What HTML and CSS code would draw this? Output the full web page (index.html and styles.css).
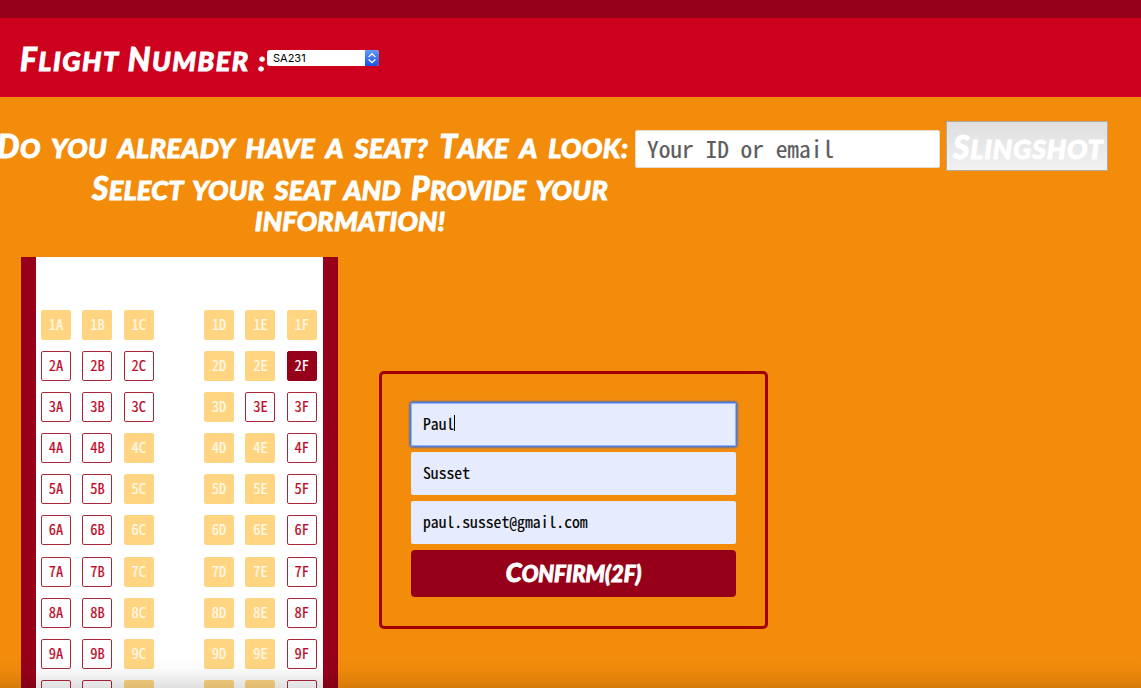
FILE: index.html
```html
<!DOCTYPE html>
<html lang="en">
<head>
<meta charset="utf-8">
<title>Slingshot Airlines</title>
<link rel="stylesheet" href="styles.css">
</head>
<body>
<div class="topbar"></div>
<header class="flight-bar">
  <label class="marker flight-label"><b>F</b>light <b>N</b>umber :</label>
  <div class="select"><span>SA231</span><svg class="arrows" viewBox="0 0 14 16"><path d="M4 6.6 7 3.7l3 2.9M4 9.7l3 2.9 3-2.9"/></svg></div>
</header>
<main>
  <div class="lookup">
    <label class="marker lookup-label"><b>D</b>o you already have a seat? <b>T</b>ake a look:</label>
    <input class="lookup-input" placeholder="Your ID or email">
    <button class="marker lookup-button"><b>S</b>lingshot</button>
  </div>
  <h1 class="marker heading"><span class="line-one"><b>S</b>elect your seat and <b>P</b>rovide your</span><span class="line-two">information!</span></h1>
  <div class="content">
    <div class="plane" id="plane"></div>
    <form class="form">
      <div class="field focused"><span>Paul</span><i class="caret"></i></div>
      <div class="field">Susset</div>
      <div class="field">paul.susset@gmail.com</div>
      <button type="button" class="marker confirm"><b>C</b>onfirm(2F)</button>
    </form>
  </div>
</main>
<div class="fade"></div>
<script src="seats.js"></script>
</body>
</html>
```
FILE: styles.css
```css
* { box-sizing: border-box; }
html { overflow: hidden; }
body { margin: 0; height: 688px; overflow: hidden; background: #f38c0b; font-family: "Noto Sans Mono CJK JP", "Liberation Mono", monospace; }
.topbar { height: 18px; background: #960018; }
.flight-bar { height: 79px; background: #cd001d; padding: 0 20px; display: flex; align-items: center; }
.marker { color: #fff; font-family: Lato, "Open Sans", sans-serif; font-weight: 900; font-style: italic; text-transform: uppercase; font-size: 27px; line-height: 32px; white-space: nowrap; -webkit-text-stroke: 0.9px #fff; }
.marker b { font-size: 1.17em; font-weight: 900; line-height: 1; }
.flight-label { width: 247px; padding-top: 6px; letter-spacing: 1.5px; word-spacing: 1.5px; }
.select { width: 112px; height: 16px; background: #fff; border-radius: 3px; display: flex; justify-content: space-between; align-items: center; overflow: hidden; padding-left: 6px; font: 11px Inter, sans-serif; color: #000; }
.arrows { width: 14px; height: 16px; background: linear-gradient(#629bf6, #1d50df); fill: none; stroke: #fff; stroke-width: 1.3; stroke-linecap: round; stroke-linejoin: round; }
.lookup { height: 50px; margin-top: 24px; padding-right: 33px; display: flex; justify-content: flex-end; align-items: center; }
.lookup-label { flex: none; width: 631px; margin-right: 7px; padding-top: 2px; letter-spacing: 0.5px; word-spacing: 5px; }
.lookup-input { flex: none; width: 305px; height: 38px; margin: 6px 6px 0 0; border: 1px solid #e8dccb; border-radius: 2px; padding: 0 11px 3px; font-family: inherit; font-size: 23.4px; color: #000; outline: 0; }
.lookup-input::placeholder { color: #5c5c5c; opacity: 1; -webkit-text-stroke: 0.2px #5c5c5c; }
.lookup-button { flex: none; width: 162px; height: 50px; border: 1px solid #b5aaa0; padding: 4px 6px 0; text-align: left; letter-spacing: 0.8px; background: linear-gradient(#dfdfdf, #f1f1f1); }
.heading { margin: 2px 0 0; width: 700px; text-align: center; }
.heading span { display: block; }
.line-one { letter-spacing: 0.3px; word-spacing: 4px; }
.line-two { letter-spacing: 0.2px; margin-top: -1px; }
.content { display: flex; align-items: flex-start; margin-top: 20px; padding-left: 21px; }
.plane { width: 317px; height: 431px; overflow: hidden; background: #fff; border: solid #960018; border-width: 0 15px; padding: 53px 5px 0; display: grid; grid-template-columns: 30px 30px 30px 27.5px 30px 30px 30px; column-gap: 11.4px; grid-auto-rows: 30px; row-gap: 11.1px; align-content: start; justify-content: start; }
.seat { border: 1px solid #ac2639; border-radius: 2px; color: #bd0c2b; font-size: 14.5px; line-height: 25px; text-align: center; -webkit-text-stroke: 0.2px currentColor; }
.taken { background: #ffd581; border-color: #ffd581; color: #fff8e8; }
.selected { background: #960018; border-color: #960018; color: #fff; }
.form { width: 389px; height: 258px; margin: 114px 0 0 41px; border: 3px solid #a00008; border-radius: 5px; padding: 29px; display: flex; flex-direction: column; gap: 6px; }
.field { height: 43px; flex: none; background: #e6ecfd; border-radius: 2px; padding: 0 12px 3px; display: flex; align-items: center; font-size: 15.7px; color: #000; -webkit-text-stroke: 0.15px #000; }
.focused { box-shadow: 0 0 0 1px #4d7edb, 0 0 2px 2px #716e91, inset 0 0 0 1px #8fb5fb; }
.caret { width: 1px; height: 16px; background: #000; }
.confirm { height: 47px; flex: none; background: #960018; border: 0; border-radius: 4px; font-size: 22px; padding: 0; }
.fade { position: absolute; left: 0; right: 0; bottom: 0; height: 32px; background: linear-gradient(rgba(0,0,0,0), rgba(0,0,0,.02) 40%, rgba(0,0,0,.12)); }
```
FILE: seats.js
```js
const free = { 2: "ABC", 3: "ABCEF" };
const plane = document.getElementById("plane");
for (let row = 1; row <= 10; row++) {
  const open = row === 1 ? "" : free[row] || "ABF";
  for (const col of "ABC DEF") {
    const seat = document.createElement("div");
    if (col !== " ") {
      seat.className = "seat" + (row === 2 && col === "F" ? " selected" : open.includes(col) ? "" : " taken");
      if (row < 10) seat.textContent = row + col;
    }
    plane.append(seat);
  }
}
```
